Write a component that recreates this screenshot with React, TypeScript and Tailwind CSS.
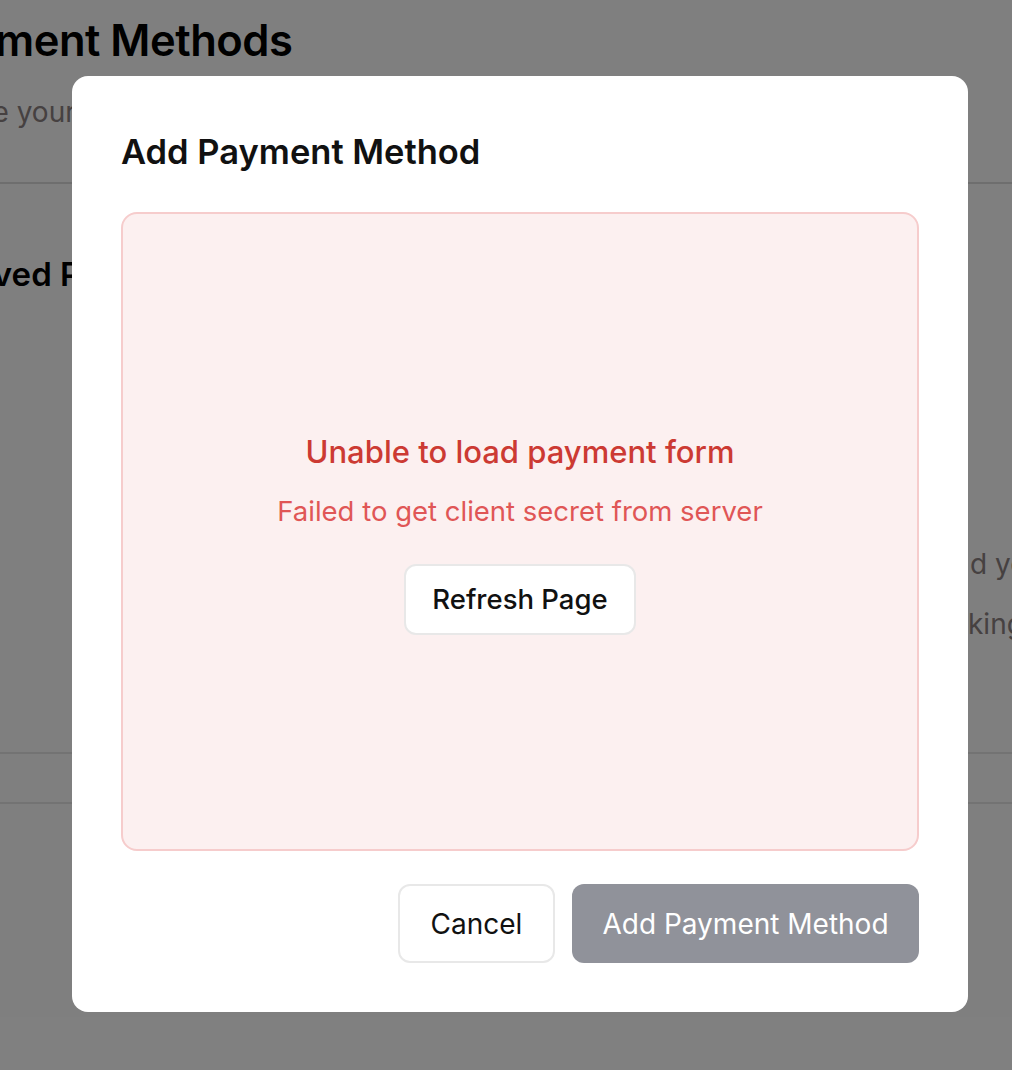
import React from "react";

const font = { fontFamily: "Inter, 'Noto Sans', sans-serif" };

function BackgroundPage() {
  return (
    <div className="flex h-[1070px] w-full flex-col overflow-hidden bg-white whitespace-nowrap">
      <div className="pt-[8px]">
        <h1 className="-ml-[81px] text-[43.5px] font-semibold leading-[64px] tracking-[-0.5px] text-black">
          Payment Methods
        </h1>
        <p className="-ml-[98px] mt-[20px] text-[28px] leading-[40px] text-[#8c8282]">
          Manage your saved payment methods
        </p>
      </div>
      <div className="mt-[50px] border-t-2 border-[#dcdcdc]" />
      <div className="flex flex-col">
        <h2 className="-ml-[47px] mt-[68px] text-[33px] font-semibold leading-[44px] text-black">
          Saved Payment Methods
        </h2>
        <p className="mt-[248px] pl-[970px] text-[28px] leading-[40px] text-[#8c8282]">
          d your first payment method
        </p>
        <p className="mt-[20px] pl-[968px] text-[28px] leading-[40px] text-[#8c8282]">
          king a purchase
        </p>
      </div>
      <div className="mt-[108px] border-t-2 border-[#e6e6e6]" />
      <div className="mt-[48px] border-t-2 border-[#e6e6e6]" />
    </div>
  );
}

export default function App() {
  return (
    <div className="relative h-[1070px] w-full overflow-hidden" style={font}>
      <BackgroundPage />
      <div className="absolute inset-0 bg-black/50" />

      {/* modal */}
      <div className="absolute left-[72px] top-[76px] flex w-[896px] flex-col rounded-[16px] bg-white px-[49px] pb-[49px] pt-[52px]">
        <h3 className="text-[34.5px] font-semibold leading-[48px] text-[#111]">
          Add Payment Method
        </h3>

        <div className="mt-[36px] flex h-[639px] flex-col items-center justify-center rounded-[16px] border-2 border-[#f6cccc] bg-[#fcf0f0] pt-[4px]">
          <p className="text-[31px] font-medium leading-[40px] text-[#cc3a33]">
            Unable to load payment form
          </p>
          <p className="mt-[21px] text-[27.5px] leading-[36px] text-[#e05656]">
            Failed to get client secret from server
          </p>
          <button className="mt-[35px] h-[71px] rounded-[12px] border-2 border-[#e8e8e8] bg-white px-[26px] text-[27.5px] font-medium text-[#111]">
            Refresh Page
          </button>
        </div>

        <div className="mt-[33px] flex justify-end gap-[17px]">
          <button className="h-[79px] w-[157px] rounded-[12px] border-2 border-[#e8e8e8] bg-white text-[28px] text-[#111]">
            Cancel
          </button>
          <button className="h-[79px] w-[347px] rounded-[12px] bg-[#90929a] text-[28px] text-white">
            Add Payment Method
          </button>
        </div>
      </div>
    </div>
  );
}
